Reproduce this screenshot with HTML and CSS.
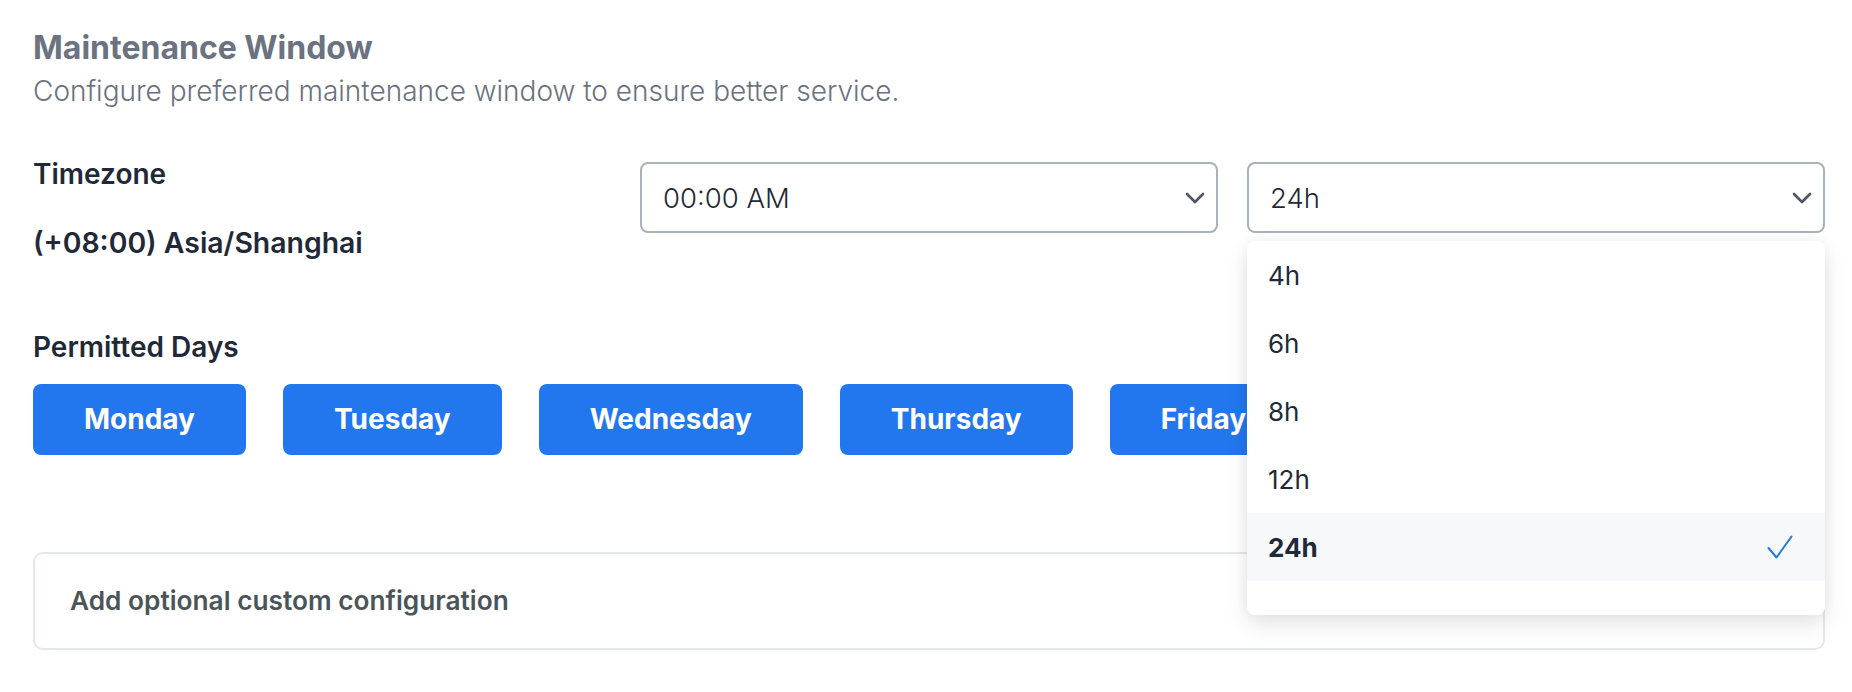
FILE: index.html
```html
<!DOCTYPE html>
<html lang="en">
<head>
<meta charset="utf-8">
<title>Maintenance Window</title>
<link rel="stylesheet" href="styles.css">
</head>
<body>
<main class="page">
  <h2 class="title">Maintenance Window</h2>
  <p class="subtitle">Configure preferred maintenance window to ensure better service.</p>

  <section class="settings">
    <div class="tz">
      <div class="label">Timezone</div>
      <div class="label tz-value">(+08:00) Asia/Shanghai</div>
    </div>
    <div class="select-wrap">
      <div class="select">
        <span>00:00 AM</span>
        <svg class="chevron" viewBox="0 0 20 12" width="20" height="12"><polyline points="2,2 10,10 18,2" fill="none" stroke="#4b5563" stroke-width="2.6" stroke-linecap="round" stroke-linejoin="round"/></svg>
      </div>
    </div>
    <div class="select-wrap">
      <div class="select">
        <span>24h</span>
        <svg class="chevron" viewBox="0 0 20 12" width="20" height="12"><polyline points="2,2 10,10 18,2" fill="none" stroke="#4b5563" stroke-width="2.6" stroke-linecap="round" stroke-linejoin="round"/></svg>
      </div>
      <ul class="dropdown">
        <li class="option">4h</li>
        <li class="option">6h</li>
        <li class="option">8h</li>
        <li class="option">12h</li>
        <li class="option selected"><span>24h</span>
          <svg class="check" viewBox="0 0 26 26" width="26" height="26"><polyline points="1.5,14 9.5,23.5 24.5,2.5" fill="none" stroke="#2277ef" stroke-width="2" stroke-linecap="round" stroke-linejoin="round"/></svg>
        </li>
      </ul>
    </div>
  </section>

  <div class="label days-label">Permitted Days</div>
  <div class="days">
    <button class="day">Monday</button>
    <button class="day">Tuesday</button>
    <button class="day">Wednesday</button>
    <button class="day">Thursday</button>
    <button class="day">Friday</button>
    <button class="day">Saturday</button>
    <button class="day">Sunday</button>
  </div>

  <div class="custom">Add optional custom configuration</div>
</main>
</body>
</html>
```
FILE: styles.css
```css
body {
  margin: 0;
  background: #ffffff;
  font-family: Inter, "Noto Sans", "Liberation Sans", sans-serif;
}

.page {
  padding: 30px 27px 0 33px;
}

.title {
  margin: 0;
  font-size: 32px;
  line-height: 36px;
  font-weight: 700;
  color: #6b7280;
}

.subtitle {
  margin: 8px 0 0;
  font-size: 28px;
  line-height: 34px;
  font-weight: 300;
  color: #6b7280;
}

.settings {
  display: grid;
  grid-template-columns: repeat(3, 1fr);
  column-gap: 29px;
  align-items: start;
  margin-top: 49px;
}

.label {
  font-size: 28px;
  line-height: 34px;
  font-weight: 600;
  color: #1f2937;
}

.tz-value {
  margin-top: 35px;
  font-size: 28.4px;
}

.select-wrap {
  position: relative;
  margin-top: 5px;
}

.select {
  box-sizing: border-box;
  height: 71px;
  display: flex;
  align-items: center;
  justify-content: space-between;
  padding: 0 11px 0 21px;
  border: 2px solid #a8b2bb;
  border-radius: 8px;
  background: #fff;
  font-size: 27.5px;
  font-weight: 300;
  color: #1f2937;
}

.chevron {
  display: block;
}

.dropdown {
  position: absolute;
  top: 79px;
  left: 0;
  right: 0;
  z-index: 10;
  margin: 0;
  padding: 0 0 34px;
  list-style: none;
  background: #fff;
  border-radius: 8px;
  box-shadow: 0 10px 22px rgba(15, 23, 42, 0.10), 0 0 14px rgba(15, 23, 42, 0.05);
}

.option {
  height: 68px;
  display: flex;
  align-items: center;
  justify-content: space-between;
  padding: 0 32px 0 21px;
  font-size: 26px;
  font-weight: 400;
  color: #1f2937;
}

.option.selected {
  background: #f7f8fa;
  font-weight: 700;
}

.check {
  display: block;
}

.days-label {
  margin-top: 70px;
}

.days {
  display: flex;
  gap: 37px;
  margin-top: 20px;
}

.day {
  height: 71px;
  padding: 0 51px;
  border: none;
  border-radius: 8px;
  background: #2277ef;
  color: #ffffff;
  font-family: inherit;
  font-size: 28px;
  font-weight: 700;
  line-height: 71px;
  white-space: nowrap;
  flex: none;
}

.custom {
  box-sizing: border-box;
  height: 98px;
  margin-top: 97px;
  padding-left: 35px;
  border: 2px solid #e5e8ec;
  border-radius: 10px;
  font-size: 26.25px;
  line-height: 94px;
  font-weight: 600;
  color: #4b5559;
}
```
